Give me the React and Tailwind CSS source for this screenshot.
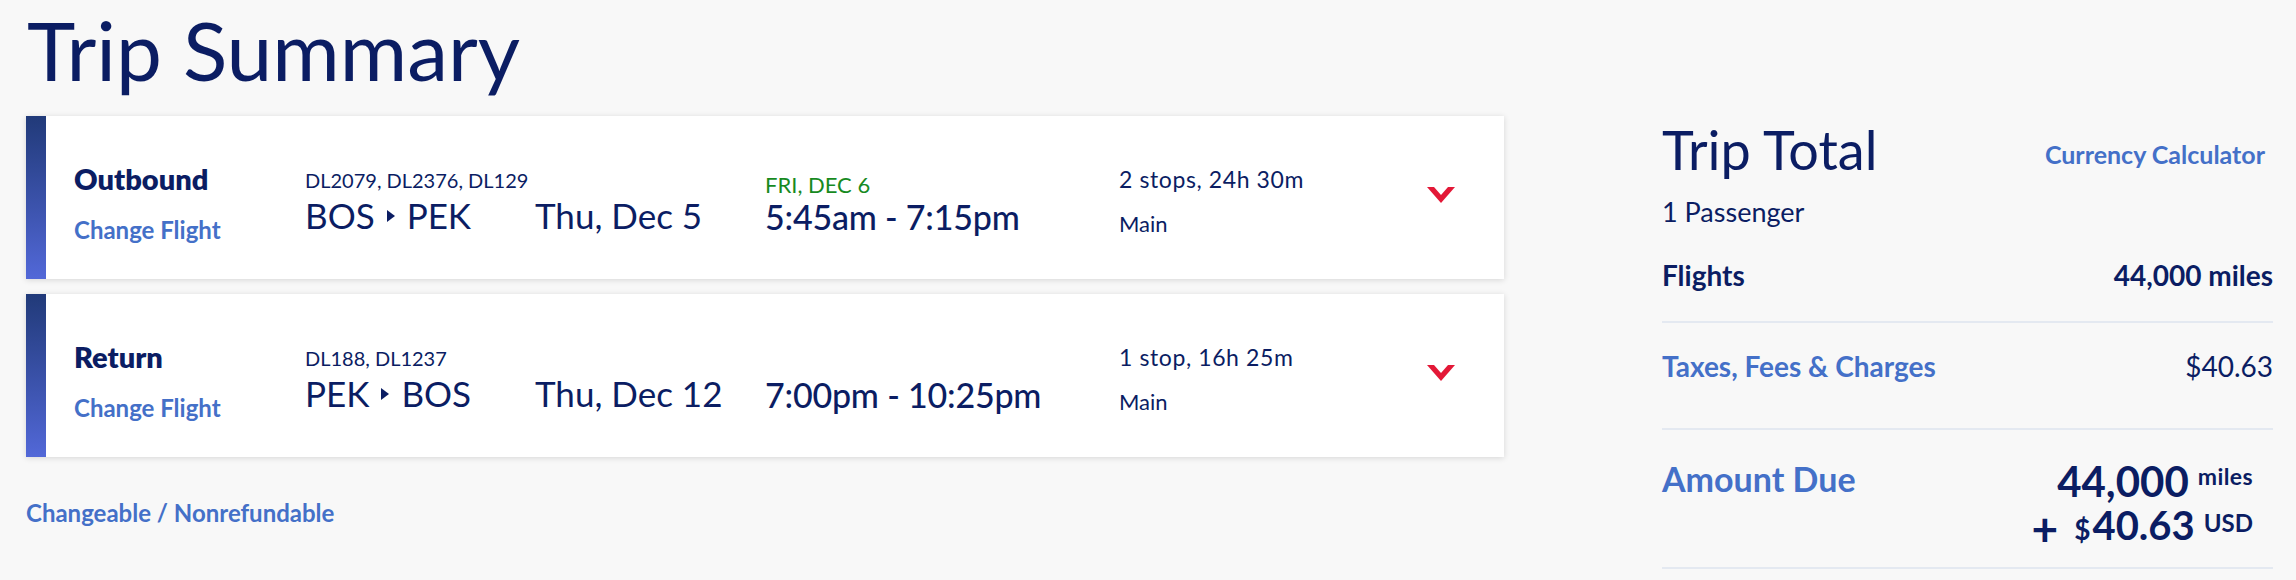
import React from "react";

const NAVY = "text-[#0b1d63]";

function Triangle() {
  return (
    <svg width="8" height="12" viewBox="0 0 8 12" className="mx-[12px] mt-[2px]">
      <polygon points="0,0 8,6 0,12" fill="#0b1d63" />
    </svg>
  );
}

function Chevron() {
  return (
    <svg width="28" height="16" viewBox="0 0 28 16">
      <polygon points="0,0 7,0 14,8 21,0 28,0 14,16" fill="#e31837" />
    </svg>
  );
}

function FlightCard({ label, flights, from, to, date, nextDay, time, stops }) {
  return (
    <div className="flex h-[163px] bg-white shadow-[0_1px_6px_rgba(0,0,0,0.14)]">
      <div className="w-[20px] shrink-0 bg-gradient-to-b from-[#213a79] to-[#5268d8]" />
      <div className="flex pl-[28px]">
        <div className="flex w-[231px] flex-col pt-[45px]">
          <div className={`text-[29px] font-extrabold leading-[36px] ${NAVY}`}>{label}</div>
          <div className="mt-[18px] text-[24px] font-bold leading-[30px] text-[#4470c8]">Change Flight</div>
        </div>
        <div className="flex w-[230px] flex-col pt-[52px]">
          <div className={`text-[20px] leading-[24px] ${NAVY}`}>{flights}</div>
          <div className={`mt-[2px] flex items-center text-[35px] leading-[42px] ${NAVY}`}>
            <span>{from}</span>
            <Triangle />
            <span>{to}</span>
          </div>
        </div>
        <div className={`w-[230px] pt-[78px] text-[35px] leading-[42px] ${NAVY}`}>{date}</div>
        <div className={`flex w-[354px] flex-col ${nextDay ? "pt-[57px]" : "pt-[81px]"}`}>
          {nextDay && <div className="text-[22px] leading-[24px] text-[#178a1f]">{nextDay}</div>}
          <div className={`text-[34px] font-medium leading-[40px] tracking-[-0.2px] ${NAVY}`}>{time}</div>
        </div>
        <div className={`flex w-[308px] flex-col pt-[49px] ${NAVY}`}>
          <div className="text-[23px] leading-[28px] tracking-[0.6px]">{stops}</div>
          <div className="mt-[17px] text-[22px] leading-[28px]">Main</div>
        </div>
        <div className="pt-[71px]">
          <Chevron />
        </div>
      </div>
    </div>
  );
}

export default function App() {
  return (
    <div className="flex min-h-[580px] w-full bg-[#f8f8f8] [font-family:Lato,'Noto_Sans',sans-serif]">
      <div className="flex w-[1504px] shrink-0 flex-col pl-[26px] pt-[8px]">
        <h1 className={`ml-[1px] text-[82px] font-normal leading-[82px] ${NAVY}`}>Trip Summary</h1>
        <div className="mt-[26px] flex flex-col gap-[15px]">
          <FlightCard
            label="Outbound"
            flights="DL2079, DL2376, DL129"
            from="BOS"
            to="PEK"
            date="Thu, Dec 5"
            nextDay="FRI, DEC 6"
            time="5:45am - 7:15pm"
            stops="2 stops, 24h 30m"
          />
          <FlightCard
            label="Return"
            flights="DL188, DL1237"
            from="PEK"
            to="BOS"
            date="Thu, Dec 12"
            time="7:00pm - 10:25pm"
            stops="1 stop, 16h 25m"
          />
        </div>
        <div className="mt-[41px] text-[24px] font-bold leading-[30px] text-[#4470c8]">Changeable / Nonrefundable</div>
      </div>

      <div className={`ml-[158px] flex w-[611px] shrink-0 flex-col pt-[118px] ${NAVY}`}>
        <div className="flex items-start justify-between">
          <div className="text-[54px] leading-[64px]">Trip Total</div>
          <div className="mr-[8px] mt-[21px] text-[25px] font-bold leading-[30px] text-[#4470c8]">Currency Calculator</div>
        </div>
        <div className="mt-[14px] text-[27px] leading-[32px]">1 Passenger</div>
        <div className="mt-[30px] flex justify-between text-[28px] font-bold leading-[34px]">
          <span>Flights</span>
          <span>44,000 miles</span>
        </div>
        <div className="mt-[29px] h-[2px] bg-[#e4e9f1]" />
        <div className="mt-[27px] flex justify-between text-[28px] leading-[32px]">
          <span className="font-bold text-[#4470c8]">Taxes, Fees &amp; Charges</span>
          <span>$40.63</span>
        </div>
        <div className="mt-[46px] h-[2px] bg-[#e4e9f1]" />
        <div className="mt-[29px] flex items-start justify-between">
          <div className="text-[34px] font-bold leading-[40px] text-[#4470c8]">Amount Due</div>
          <div className="flex flex-col items-end pr-[20px] font-bold">
            <div className="flex items-start">
              <span className="text-[42px] leading-[44px]">44,000</span>
              <span className="ml-[9px] mt-[5px] text-[23px] leading-[24px] tracking-[0.4px]">miles</span>
            </div>
            <div className="flex items-start">
              <span className="mt-[4px] text-[46px] leading-[44px]">+</span>
              <span className="ml-[16px] mt-[10px] text-[28px] leading-[32px]">$</span>
              <span className="ml-[2px] text-[40px] leading-[44px]">40.63</span>
              <span className="ml-[9px] mt-[6px] text-[24px] leading-[28px]">USD</span>
            </div>
          </div>
        </div>
        <div className="mt-[16px] h-[2px] bg-[#e4e9f1]" />
      </div>
    </div>
  );
}
